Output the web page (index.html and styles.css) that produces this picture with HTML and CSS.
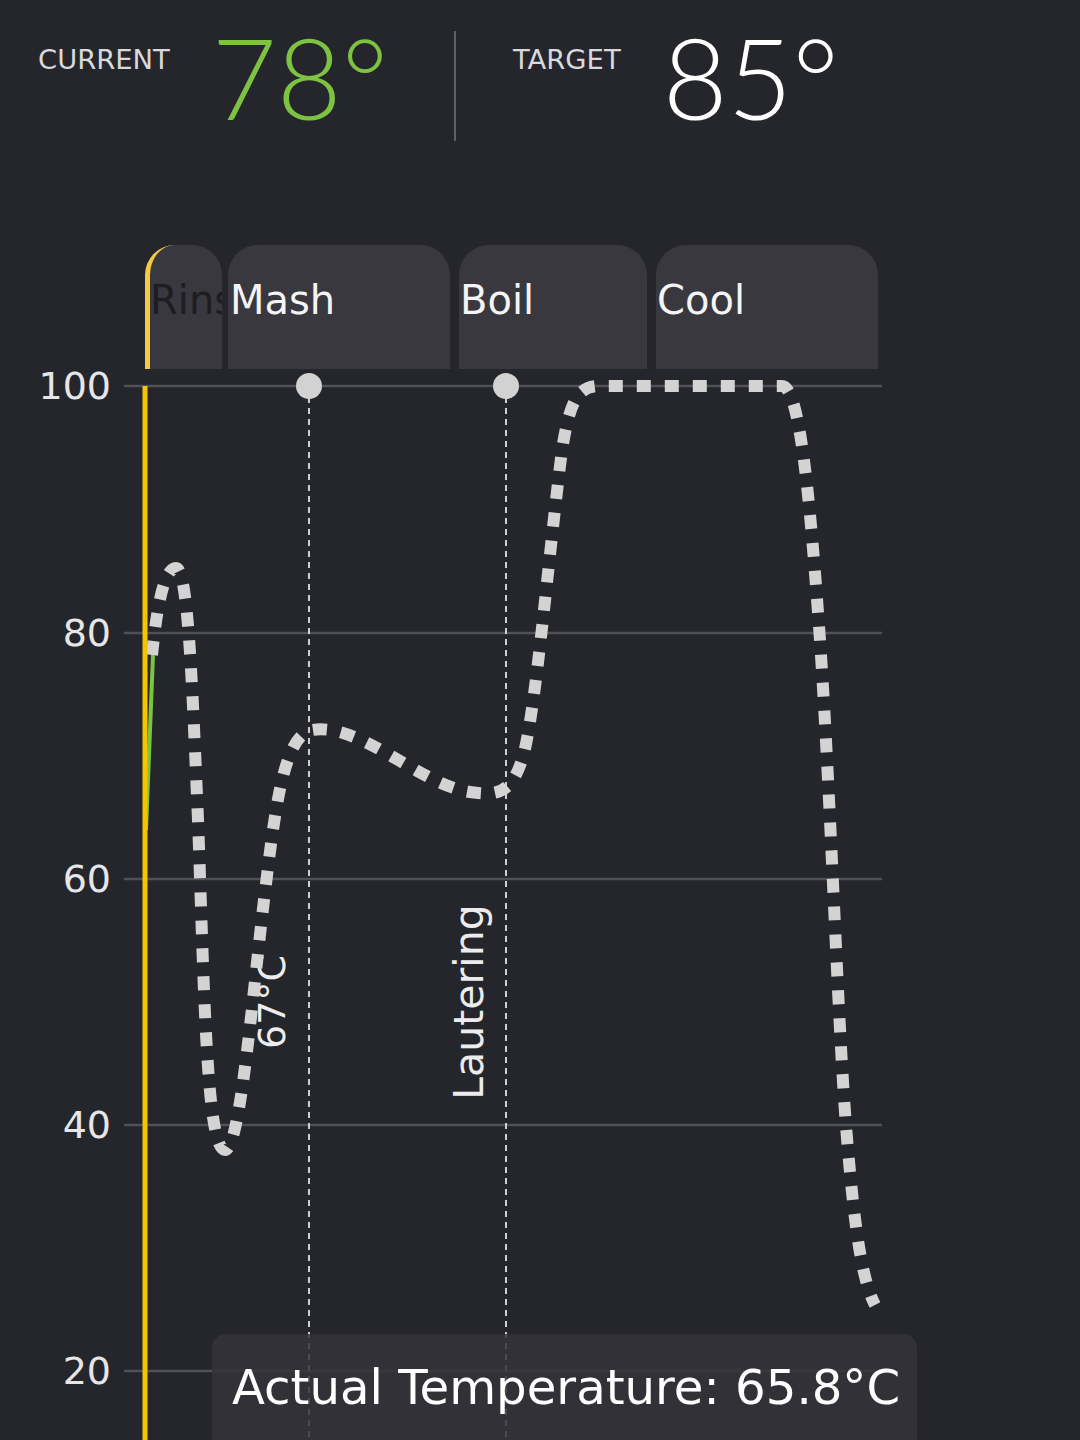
FILE: index.html
```html
<!DOCTYPE html>
<html>
<head>
    <title>Brew Session</title>
    <link rel="stylesheet" href="styles.css">
</head>
<body>
    <header class="readout">
        <div class="reading">
            <span class="label">CURRENT</span>
            <span class="value current">78°</span>
        </div>
        <div class="divider"></div>
        <div class="reading">
            <span class="label">TARGET</span>
            <span class="value">85°</span>
        </div>
    </header>

    <section class="chart">
        <div class="stages">
            <div class="stage rinse">Rinse</div>
            <div class="stage mash">Mash</div>
            <div class="stage boil">Boil</div>
            <div class="stage cool">Cool</div>
        </div>

        <svg class="plot" width="1080" height="1071" viewBox="0 369 1080 1071">
            <!-- grid -->
            <g class="grid">
                <line x1="124" y1="386" x2="882" y2="386"/>
                <line x1="124" y1="633" x2="882" y2="633"/>
                <line x1="124" y1="879" x2="882" y2="879"/>
                <line x1="124" y1="1125" x2="882" y2="1125"/>
                <line x1="124" y1="1371" x2="882" y2="1371"/>
            </g>
            <g class="axis-labels">
                <text x="111" y="399">100</text>
                <text x="111" y="646">80</text>
                <text x="111" y="892">60</text>
                <text x="111" y="1138">40</text>
                <text x="111" y="1384">20</text>
            </g>

            <!-- stage markers -->
            <line class="marker" x1="309" y1="386" x2="309" y2="1440"/>
            <line class="marker" x1="506" y1="386" x2="506" y2="1440"/>
            <circle class="marker-dot" cx="309" cy="386" r="13"/>
            <circle class="marker-dot" cx="506" cy="386" r="13"/>
            <text class="step-label" transform="translate(285 1002) rotate(-90)" font-size="38">67°C</text>
            <text class="step-label" transform="translate(483 1002) rotate(-90)" font-size="41">Lautering</text>

            <!-- planned profile -->
            <path class="profile" d="M152,655 C158,595 166,568 176,568 C188,568 192,680 198,820 C204,980 206,1150 225,1150 C240,1150 252,1000 264,900 C274,820 282,735 312,730 C360,722 420,785 470,792 C500,797 512,790 522,760 C535,720 548,560 562,450 C570,400 578,386 600,386 L782,386 C800,386 810,500 820,640 C832,820 838,1040 848,1150 C855,1230 862,1280 875,1305"/>

            <!-- actual -->
            <line class="actual" x1="146" y1="830" x2="153" y2="655"/>
            <line class="now" x1="145" y1="386" x2="145" y2="1440"/>
        </svg>

        <div class="tooltip">Actual Temperature: 65.8°C</div>
    </section>
</body>
</html>
```

FILE: styles.css
```css
body { margin: 0; width: 1080px; height: 1440px; overflow: hidden; background: #25262b; font-family: "DejaVu Sans", sans-serif; color: #f4f4f6; }

.readout { display: flex; align-items: flex-start; height: 245px; padding-left: 38px; box-sizing: border-box; }
.reading { display: flex; align-items: flex-start; }
.label { font-size: 27.4px; line-height: 1; margin-top: 46px; color: #d9d9dd; }
.value { font-family: Lato, sans-serif; font-weight: 300; font-size: 112px; line-height: 1; margin-top: 21px; margin-left: 42px; color: #ffffff; }
.value.current { color: #7ec242; }
.divider { width: 2px; height: 110px; margin: 31px 57px 0 66px; background: #5f6065; }

.chart { position: relative; }
.stages { display: flex; height: 124px; padding-left: 145px; }
.stage { box-sizing: border-box; height: 124px; padding-top: 27px; font-size: 40px; line-height: 1.4; background: #38383e; border-radius: 30px 30px 0 0; white-space: nowrap; }
.rinse { width: 77px; margin-right: 6px; overflow: hidden; border-left: 5px solid #f6c945; color: #1d1d21; }
.mash { width: 222px; margin-right: 9px; padding-left: 2px; }
.boil { width: 188px; margin-right: 9px; padding-left: 1px; }
.cool { width: 222px; padding-left: 1px; }

.plot { display: block; overflow: visible; }
.grid line { stroke: #505157; stroke-width: 2.5; }
.axis-labels text { font-size: 38px; fill: #e6e6e8; text-anchor: end; }
.marker { stroke: #cfcfcf; stroke-width: 2; stroke-dasharray: 6 5; }
.marker-dot { fill: #d2d2d2; }
.step-label { fill: #ececee; text-anchor: middle; }
.profile { fill: none; stroke: #d3d3d3; stroke-width: 12; stroke-dasharray: 14 14; }
.actual { stroke: #7ec242; stroke-width: 4; }
.now { stroke: #f6c500; stroke-width: 5; }

.tooltip { position: absolute; left: 212px; top: 1089px; width: 705px; height: 130px; box-sizing: border-box; padding: 25px 0 0 20px; border-radius: 14px; background: rgba(52, 52, 57, 0.85); font-size: 48.2px; line-height: 1.2; color: #ffffff; }
```
